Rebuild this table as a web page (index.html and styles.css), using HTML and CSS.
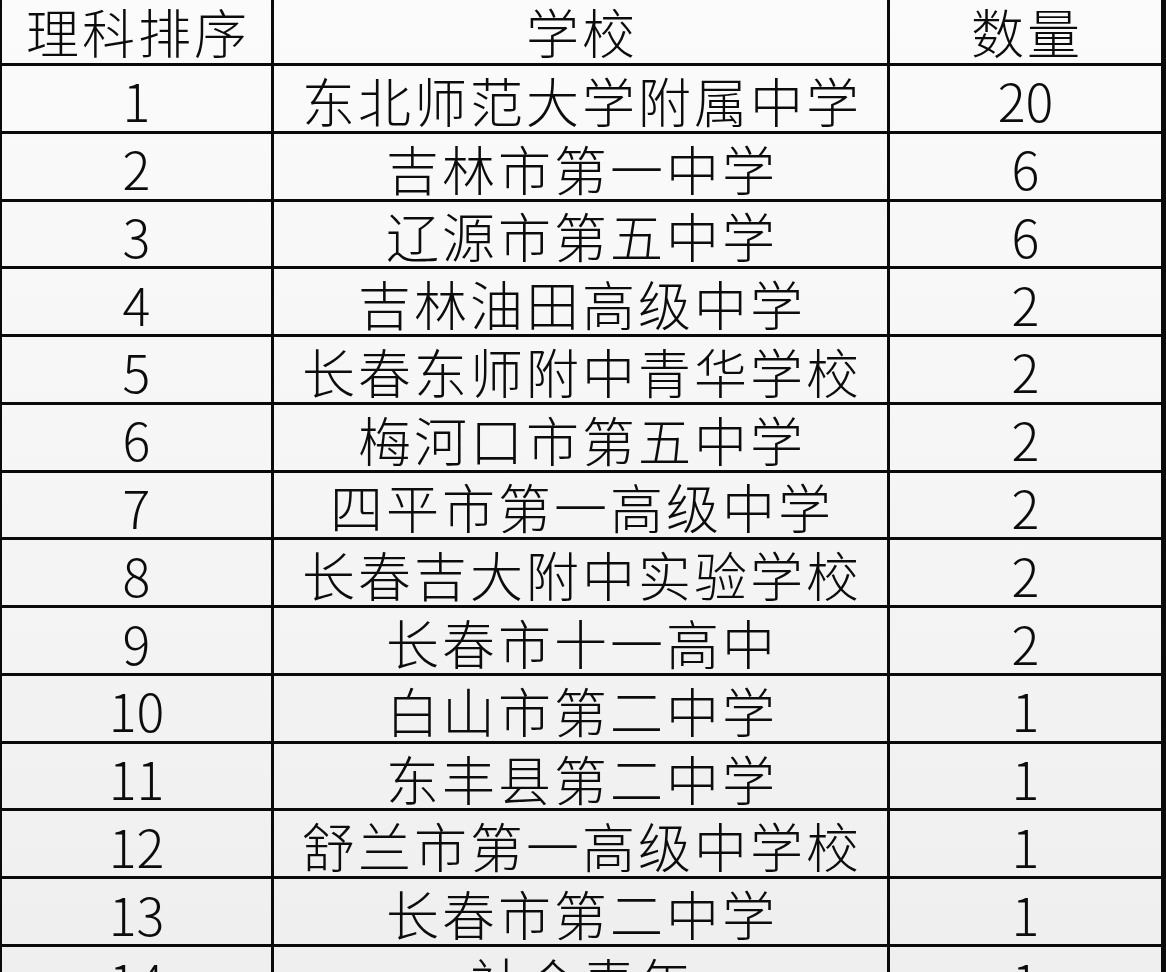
FILE: index.html
```html
<!DOCTYPE html>
<html lang="zh-CN">
<head>
<meta charset="utf-8">
<title>理科排序</title>
<link rel="stylesheet" href="styles.css">
</head>
<body>
<div class="sheet">
  <div class="cell head">理科排序</div><div class="cell head">学校</div><div class="cell head last">数量</div>
  <div class="cell num">1</div><div class="cell">东北师范大学附属中学</div><div class="cell num last">20</div>
  <div class="cell num">2</div><div class="cell">吉林市第一中学</div><div class="cell num last">6</div>
  <div class="cell num">3</div><div class="cell">辽源市第五中学</div><div class="cell num last">6</div>
  <div class="cell num">4</div><div class="cell">吉林油田高级中学</div><div class="cell num last">2</div>
  <div class="cell num">5</div><div class="cell">长春东师附中青华学校</div><div class="cell num last">2</div>
  <div class="cell num">6</div><div class="cell">梅河口市第五中学</div><div class="cell num last">2</div>
  <div class="cell num">7</div><div class="cell">四平市第一高级中学</div><div class="cell num last">2</div>
  <div class="cell num">8</div><div class="cell">长春吉大附中实验学校</div><div class="cell num last">2</div>
  <div class="cell num">9</div><div class="cell">长春市十一高中</div><div class="cell num last">2</div>
  <div class="cell num">10</div><div class="cell">白山市第二中学</div><div class="cell num last">1</div>
  <div class="cell num">11</div><div class="cell">东丰县第二中学</div><div class="cell num last">1</div>
  <div class="cell num">12</div><div class="cell">舒兰市第一高级中学校</div><div class="cell num last">1</div>
  <div class="cell num">13</div><div class="cell">长春市第二中学</div><div class="cell num last">1</div>
  <div class="cell num">14</div><div class="cell">社会青年</div><div class="cell num last">1</div>
</div>
</body>
</html>
```
FILE: styles.css
```css
html, body {
  margin: 0;
  padding: 0;
  background: #f3f3f3;
  overflow: hidden;
}
.sheet {
  display: grid;
  grid-template-columns: 272px 616px 271px;
  grid-template-rows: 66px repeat(14, 67.77px);
  width: 1159px;
  border-left: 2px solid #0a0a0a;
  border-right: 5px solid #0a0a0a;
  background: linear-gradient(#fbfbfb, #f5f5f5 50%, #eeeeee);
  font-family: "Noto Sans CJK SC", "Noto Sans", sans-serif;
  font-weight: 300;
  color: #0c0c0c;
}
.cell {
  border-right: 3px solid #0a0a0a;
  border-bottom: 3px solid #0a0a0a;
  display: flex;
  align-items: center;
  justify-content: center;
  font-size: 53px;
  letter-spacing: 3px;
  text-indent: 3px;
  line-height: 1;
  padding-top: 4px;
  box-sizing: border-box;
  white-space: nowrap;
}
.cell.last {
  border-right: none;
}
.cell.num {
  letter-spacing: 0;
  text-indent: 0;
  font-size: 52px;
}
.cell.head {
  padding-top: 0;
}
```
